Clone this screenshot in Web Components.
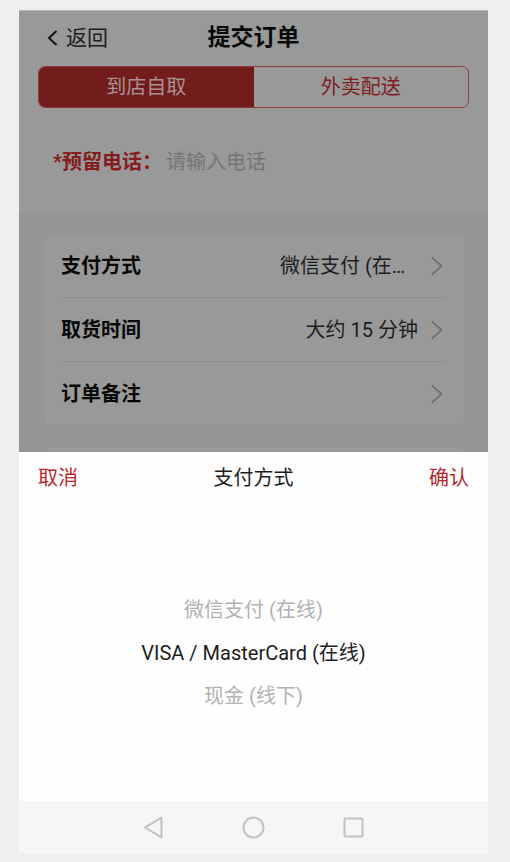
<!DOCTYPE html>
<html lang="zh-CN">
<head>
<meta charset="utf-8">
<meta name="viewport" content="width=device-width, initial-scale=1">
<title>提交订单</title>
<style>
  body {
    margin: 0;
    padding: 10px 22px 8px 19px;
    background: #efefef;
    font-family: Roboto, "Noto Sans CJK SC", sans-serif;
    font-size: 20px;
    line-height: 30px;
    color: #1d1d1d;
  }
</style>
</head>
<body>
<phone-screen>
  <order-header heading="提交订单">返回</order-header>
  <order-tabs>
    <order-tab selected>到店自取</order-tab>
    <order-tab>外卖配送</order-tab>
  </order-tabs>
  <phone-field label="*预留电话：" placeholder="请输入电话"></phone-field>
  <order-card>
    <order-row label="支付方式">微信支付 (在线)</order-row>
    <order-row label="取货时间">大约 15 分钟</order-row>
    <order-row label="订单备注"></order-row>
  </order-card>
  <order-card covered></order-card>
  <picker-sheet slot="sheet" heading="支付方式">
    <picker-option>微信支付 (在线)</picker-option>
    <picker-option selected>VISA / MasterCard (在线)</picker-option>
    <picker-option>现金 (线下)</picker-option>
  </picker-sheet>
  <system-nav slot="sheet"></system-nav>
</phone-screen>

<script>
(function () {
  // Shared by every element that holds a button, link or input.
  const reset = `
    * { box-sizing: border-box; }
    button, input, a {
      margin: 0;
      padding: 0;
      border: 0;
      background: none;
      font: inherit;
      color: inherit;
      text-align: inherit;
      text-decoration: none;
    }
    button { cursor: pointer; }
  `;

  class BaseElement extends HTMLElement {
    constructor() {
      super();
      this.attachShadow({mode: "open"});
    }

    connectedCallback() {
      this.shadowRoot.innerHTML = `<style>${reset}${this.styles()}</style>${this.render()}`;
    }
  }

  class PhoneScreen extends BaseElement {
    styles() {
      return `
        :host { display: block; }
        .page {
          background: #969696;
          border-top: 1px solid #b4b7b5;
        }
      `;
    }

    render() {
      return `<div class="page"><slot></slot></div><slot name="sheet"></slot>`;
    }
  }

  class OrderHeader extends BaseElement {
    styles() {
      return `
        :host {
          display: grid;
          grid-template-columns: 1fr auto 1fr;
          align-items: center;
          box-sizing: border-box;
          height: 55px;
          padding: 0 28px 2px;
          background: #979a98;
        }
        a {
          display: flex;
          align-items: center;
          gap: 8px;
          font-size: 21px;
        }
        h1 {
          margin: 0;
          font-size: 23px;
          font-weight: 700;
          color: #080808;
        }
      `;
    }

    render() {
      return `
        <a href="#">
          <svg width="11" height="18" viewBox="0 0 11 18" fill="none" stroke="#141414" stroke-width="2" aria-hidden="true">
            <path d="M9.500 2 2 9l7.500 7"/>
          </svg>
          <slot></slot>
        </a>
        <h1>${this.getAttribute('heading')}</h1>
      `;
    }
  }

  class OrderTabs extends BaseElement {
    styles() {
      return `
        :host {
          display: block;
          padding: 0 19px;
          background: #999999;
        }
        .tabs {
          display: flex;
          height: 42px;
          border: 1px solid #8f3c3c;
          border-radius: 7px;
          overflow: hidden;
        }
      `;
    }

    render() {
      return `<div class="tabs"><slot></slot></div>`;
    }
  }

  class OrderTab extends BaseElement {
    styles() {
      return `
        :host { display: flex; flex: 1; }
        button {
          flex: 1;
          text-align: center;
          color: #7d2022;
        }
        :host([selected]) button {
          background: #731c1c;
          color: #a99292;
        }
      `;
    }

    render() {
      return `<button type="button"><slot></slot></button>`;
    }
  }

  class PhoneField extends BaseElement {
    styles() {
      return `
        :host {
          display: flex;
          align-items: center;
          box-sizing: border-box;
          height: 107px;
          padding: 2px 24px 0 34px;
          background: #999999;
          border-bottom: 1px solid #929292;
        }
        label {
          font-weight: 700;
          color: #851d1f;
        }
        input {
          flex: 1;
          min-width: 0;
          margin-left: 4px;
          outline: none;
        }
        input::placeholder { color: #757575; opacity: 1; }
      `;
    }

    render() {
      return `
        <label for="tel">${this.getAttribute('label')}</label>
        <input id="tel" type="tel" placeholder="${this.getAttribute('placeholder')}">
      `;
    }
  }

  class OrderCard extends BaseElement {
    styles() {
      return `
        :host {
          display: block;
          margin: 18px 23px 0 24px;
          border: 1px solid #939393;
          border-radius: 8px;
          background: #999999;
        }
        /* only the top edge shows above the sheet */
        :host([covered]) {
          height: 5px;
          margin-top: 20px;
          border-bottom: 0;
          border-radius: 8px 8px 0 0;
        }
      `;
    }

    render() {
      return `<slot></slot>`;
    }
  }

  class OrderRow extends BaseElement {
    styles() {
      return `
        :host {
          display: block;
          margin: 0 17px;
          border-bottom: 1px solid #8e8e8e;
        }
        :host(:last-child) { border-bottom: 0; }
        button {
          display: flex;
          align-items: center;
          width: 100%;
          height: 63px;
          padding-right: 4px;
        }
        .label {
          flex: 1;
          font-weight: 700;
          color: #080808;
        }
        .value {
          max-width: 138px;
          overflow: hidden;
          text-overflow: ellipsis;
          white-space: nowrap;
        }
        svg { margin-left: 13px; }
      `;
    }

    render() {
      return `
        <button type="button">
          <span class="label">${this.getAttribute('label')}</span>
          <span class="value"><slot></slot></span>
          <svg width="12" height="20" viewBox="0 0 12 20" fill="none" stroke="#727272" stroke-width="1.800" aria-hidden="true">
            <path d="M1 1.500 10.500 10 1 18.500"/>
          </svg>
        </button>
      `;
    }
  }

  class PickerSheet extends BaseElement {
    styles() {
      return `
        :host {
          display: block;
          background: #fefefe;
        }
        header {
          display: grid;
          grid-template-columns: 1fr auto 1fr;
          align-items: center;
          height: 52px;
          padding: 0 19px;
        }
        h2 {
          margin: 0;
          font-size: 20px;
          font-weight: 400;
        }
        button { color: #b8272c; }
        .cancel { justify-self: start; }
        .confirm { justify-self: end; }
        .options { padding: 84px 0; }
      `;
    }

    render() {
      return `
        <header>
          <button type="button" class="cancel">取消</button>
          <h2>${this.getAttribute('heading')}</h2>
          <button type="button" class="confirm">确认</button>
        </header>
        <div class="options"><slot></slot></div>
      `;
    }
  }

  class PickerOption extends BaseElement {
    styles() {
      return `
        :host { display: block; }
        button {
          display: block;
          width: 100%;
          height: 43px;
          text-align: center;
          color: #b2b2b2;
        }
        :host([selected]) button { color: #1d1d1d; }
      `;
    }

    render() {
      return `<button type="button"><slot></slot></button>`;
    }
  }

  class SystemNav extends BaseElement {
    styles() {
      return `
        :host {
          display: flex;
          align-items: center;
          justify-content: center;
          gap: 76px;
          height: 53px;
          background: #f6f6f6;
        }
        button { display: flex; }
        svg {
          fill: none;
          stroke: #c1c1c1;
          stroke-width: 2;
          stroke-linejoin: round;
        }
      `;
    }

    render() {
      return `
        <button type="button" aria-label="back">
          <svg width="24" height="24" viewBox="0 0 24 24"><path d="M3 11.500 19.500 1.700v19.600z"/></svg>
        </button>
        <button type="button" aria-label="home">
          <svg width="24" height="24" viewBox="0 0 24 24"><circle cx="11.500" cy="11.500" r="10"/></svg>
        </button>
        <button type="button" aria-label="recent">
          <svg width="24" height="24" viewBox="0 0 24 24"><rect x="2.500" y="2.500" width="18" height="18" rx="1"/></svg>
        </button>
      `;
    }
  }

  customElements.define('phone-screen', PhoneScreen);
  customElements.define('order-header', OrderHeader);
  customElements.define('order-tabs', OrderTabs);
  customElements.define('order-tab', OrderTab);
  customElements.define('phone-field', PhoneField);
  customElements.define('order-card', OrderCard);
  customElements.define('order-row', OrderRow);
  customElements.define('picker-sheet', PickerSheet);
  customElements.define('picker-option', PickerOption);
  customElements.define('system-nav', SystemNav);
})();
</script>
</body>
</html>
